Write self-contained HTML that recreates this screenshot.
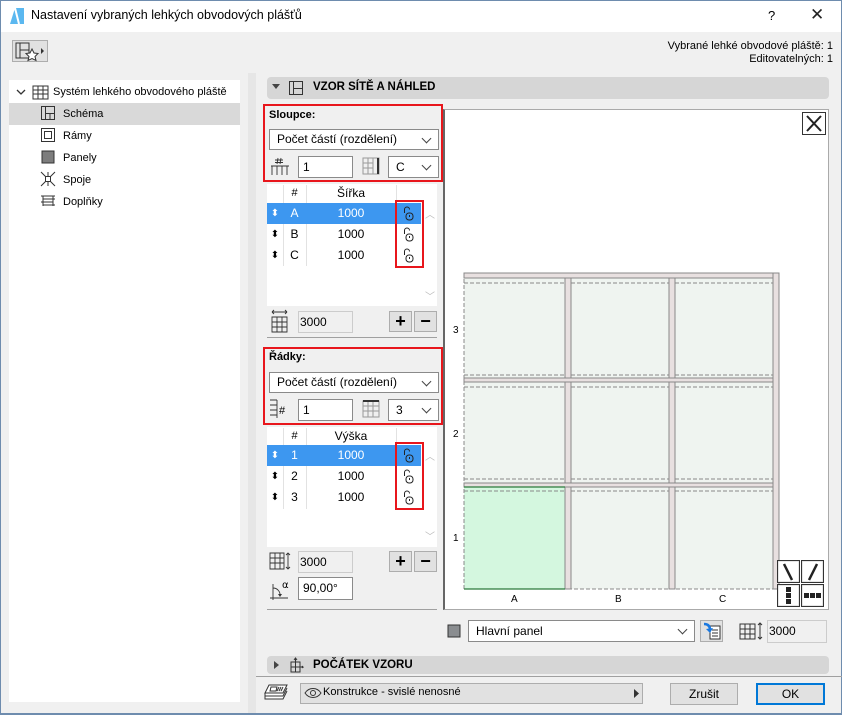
<!DOCTYPE html>
<html><head><meta charset="utf-8"><style>
*{box-sizing:border-box;margin:0;padding:0}
body{width:842px;height:715px;position:relative;background:#f0f0f0;font-family:"Liberation Sans","DejaVu Sans",sans-serif;font-size:12px;color:#000;overflow:hidden}
.a{position:absolute}
.t{position:absolute;white-space:nowrap;font-size:11px}
.dd{position:absolute;background:#fff;border:1px solid #8a8a8a;font-size:12px;padding:0 0 0 7px;line-height:19px;white-space:nowrap}
.dd:after{content:"";position:absolute;right:8px;top:5px;width:6px;height:6px;border-right:1px solid #444;border-bottom:1px solid #444;transform:rotate(45deg)}
.red{position:absolute;border:2px solid #e8161c}
.in{position:absolute;background:#fff;border:1px solid #8a8a8a;font-size:12px;line-height:20px;padding-left:4px}
.ing{position:absolute;background:#f0f0f0;border:1px solid #ccc;font-size:12px;line-height:20px;padding-left:1px}
.btn{position:absolute;background:#e1e1e1;border:1px solid #adadad;text-align:center}
.sel{background:#3d97f0;color:#fff}
.cell{position:absolute;font-size:12px;text-align:center;line-height:21px}
.bar{position:absolute;background:#d6d6d6;border-radius:4px}
</style></head><body>
<div class="a" style="left:0;top:0;width:842px;height:32px;background:#fff;border-left:1px solid #6e8cae;border-right:1px solid #6e8cae;border-top:1px solid #6e8cae"></div>
<svg class="a" style="left:9px;top:7px" width="16" height="18"><path d="M1 17 L6 1 L15 1 L15 17 Z" fill="#5bb8f0"/><path d="M6 1 L10 17" stroke="#fff" stroke-width="2"/></svg>
<div class="t" style="left:31px;top:8px;font-size:12.5px">Nastavení vybraných lehkých obvodových plášťů</div>
<div class="t" style="left:768px;top:8px;font-size:13px">?</div>
<div class="t" style="left:810px;top:5px;font-size:17px;color:#222">✕</div>
<div class="a" style="left:0;top:32px;width:1px;height:683px;background:#6e8cae"></div>
<div class="a" style="left:841px;top:32px;width:1px;height:683px;background:#6e8cae"></div>
<div class="a" style="left:0;top:713px;width:842px;height:2px;background:#6e8cae"></div>
<div class="a" style="left:12px;top:40px;width:36px;height:22px;background:#e1e1e1;border:1px solid #adadad"></div>
<svg class="a" style="left:15px;top:42px" width="32" height="20"><rect x="1" y="1" width="13" height="15" fill="none" stroke="#333"/><path d="M5 1V16M5 8H14" stroke="#333" fill="none"/><path d="M17 7l2 4 4 .5-3 3 1 4-4-2-4 2 1-4-3-3 4-.5z" fill="#fff" stroke="#333"/><path d="M26 6l3 3-3 3z" fill="#333"/></svg>
<div class="t" style="right:9px;top:40px;text-align:right;line-height:13px">Vybrané lehké obvodové pláště: 1<br>Editovatelných: 1</div>
<div class="a" style="left:9px;top:80px;width:231px;height:622px;background:#fff"></div>
<div class="a" style="left:248px;top:73px;width:8px;height:640px;background:#e6e6e6"></div>
<svg class="a" style="left:16px;top:87px" width="10" height="10"><path d="M1 3l4 4 4-4" stroke="#333" fill="none" stroke-width="1.3"/></svg>
<svg class="a" style="left:31px;top:84px" width="18" height="16"><path d="M2 2h15v13H2zM7 2v13M12 2v13M2 6h15M2 10h15" stroke="#333" fill="none"/></svg>
<div class="t" style="left:53px;top:86px">Systém lehkého obvodového pláště</div>
<div class="a" style="left:9px;top:103px;width:231px;height:22px;background:#d9d9d9"></div>
<svg class="a" style="left:40px;top:105px" width="16" height="16"><rect x="1.5" y="1.5" width="13" height="13" fill="none" stroke="#333"/><path d="M5.5 1.5v13M5.5 8.5h9M10 8.5v6" stroke="#333"/></svg>
<div class="t" style="left:63px;top:108px">Schéma</div>
<svg class="a" style="left:40px;top:127px" width="16" height="16"><rect x="1.5" y="1.5" width="13" height="13" fill="none" stroke="#333"/><rect x="4.5" y="4.5" width="7" height="7" fill="none" stroke="#333"/></svg>
<div class="t" style="left:63px;top:130px">Rámy</div>
<svg class="a" style="left:40px;top:149px" width="16" height="16"><rect x="2" y="2" width="12" height="12" fill="#7d7d7d" stroke="#333"/></svg>
<div class="t" style="left:63px;top:152px">Panely</div>
<svg class="a" style="left:40px;top:171px" width="16" height="16"><path d="M1 1l14 14M15 1L1 15M8 1v5M8 10v5" stroke="#333"/><rect x="5.5" y="5.5" width="5" height="5" fill="#fff" stroke="#333"/></svg>
<div class="t" style="left:63px;top:174px">Spoje</div>
<svg class="a" style="left:40px;top:193px" width="16" height="16"><path d="M1 3h14M3 6h12M1 9h12M3 12h12M3 3v10M13 3v10" stroke="#333" fill="none"/></svg>
<div class="t" style="left:63px;top:196px">Doplňky</div>
<div class="bar" style="left:267px;top:77px;width:562px;height:22px"></div>
<svg class="a" style="left:272px;top:84px" width="8" height="6"><path d="M0 0h8L4 5z" fill="#444"/></svg>
<svg class="a" style="left:288px;top:80px" width="16" height="16"><rect x="1.5" y="1.5" width="13" height="13" fill="none" stroke="#333"/><path d="M5.5 1.5v13M5.5 8.5h9" stroke="#333"/></svg>
<div class="t" style="left:313px;top:81px;font-weight:bold;font-size:11.5px">VZOR SÍTĚ A NÁHLED</div>
<div class="red" style="left:263px;top:104px;width:180px;height:78px"></div>
<div class="t" style="left:269px;top:109px;font-weight:bold">Sloupce:</div>
<div class="dd" style="left:269px;top:129px;width:170px;height:21px">Počet částí (rozdělení)</div>
<svg class="a" style="left:270px;top:156px" width="20" height="20"><path d="M8 2l-1 6M11 2l-1 6M5 4h8M5 6.5h8M1 10h18M2 10v9M7 10v9M12 10v9M17 10v9" stroke="#333" fill="none" stroke-width=".9"/></svg>
<div class="in" style="left:298px;top:156px;width:55px;height:22px">1</div>
<svg class="a" style="left:362px;top:157px" width="18" height="18"><path d="M1 1h16v16H1zM6 1v16M11 1v16M1 6h10M1 11h10" stroke="#999" fill="none"/><path d="M16 1v16" stroke="#333" stroke-width="2"/></svg>
<div class="dd" style="left:388px;top:156px;width:51px;height:22px;line-height:20px">C</div>
<div class="a" style="left:267px;top:184px;width:170px;height:122px;background:#fff"></div>
<div class="a" style="left:283px;top:185px;width:1px;height:81px;background:#e2e2e2"></div>
<div class="a" style="left:306px;top:185px;width:1px;height:81px;background:#e2e2e2"></div>
<div class="a" style="left:396px;top:185px;width:1px;height:81px;background:#e2e2e2"></div>
<div class="cell" style="left:283px;top:184px;width:23px;line-height:18px;font-size:11px">#</div>
<div class="cell" style="left:306px;top:184px;width:90px;line-height:18px">Šířka</div>
<div class="a sel" style="left:267px;top:203px;width:154px;height:21px"></div>
<div class="cell" style="left:267px;top:203px;width:16px;color:#fff;font-size:10px">⬍</div>
<div class="cell" style="left:283px;top:203px;width:23px;color:#fff">A</div>
<div class="cell" style="left:306px;top:203px;width:90px;color:#fff">1000</div>
<div class="cell" style="left:267px;top:224px;width:16px;font-size:10px">⬍</div>
<div class="cell" style="left:283px;top:224px;width:23px">B</div>
<div class="cell" style="left:306px;top:224px;width:90px">1000</div>
<div class="cell" style="left:267px;top:245px;width:16px;font-size:10px">⬍</div>
<div class="cell" style="left:283px;top:245px;width:23px">C</div>
<div class="cell" style="left:306px;top:245px;width:90px">1000</div>
<div class="t" style="left:425px;top:206px;color:#bbb;font-size:10px">︿</div>
<div class="t" style="left:425px;top:288px;color:#bbb;font-size:10px">﹀</div>
<div class="red" style="left:395px;top:200px;width:29px;height:68px"></div>
<svg class="a" style="left:401px;top:205px" width="14" height="60"><g fill="none" stroke="#222"><path d="M3.5 8V4.5a2.5 2.5 0 0 1 5 0"/><rect x="5" y="8" width="7" height="7" rx="3"/><path d="M8.5 10v2"/><g transform="translate(0,21)"><path d="M3.5 8V4.5a2.5 2.5 0 0 1 5 0"/><rect x="5" y="8" width="7" height="7" rx="3"/><path d="M8.5 10v2"/></g><g transform="translate(0,42)"><path d="M3.5 8V4.5a2.5 2.5 0 0 1 5 0"/><rect x="5" y="8" width="7" height="7" rx="3"/><path d="M8.5 10v2"/></g></g></svg>
<svg class="a" style="left:270px;top:309px" width="20" height="24"><path d="M2 3h15M2 3l2-2M2 3l2 2M17 3l-2-2M17 3l-2 2M2 8h15v15H2zM7 8v15M12 8v15M2 13h15M2 18h15" stroke="#333" fill="none" stroke-width=".9"/></svg>
<div class="ing" style="left:298px;top:311px;width:55px;height:22px">3000</div>
<div class="btn" style="left:389px;top:311px;width:23px;height:21px;font-size:18px;line-height:18px;font-weight:bold">+</div>
<div class="btn" style="left:414px;top:311px;width:23px;height:21px;font-size:18px;line-height:18px;font-weight:bold">−</div>
<div class="a" style="left:267px;top:337px;width:170px;height:1px;background:#a0a0a0"></div>
<div class="red" style="left:263px;top:347px;width:180px;height:78px"></div>
<div class="t" style="left:269px;top:351px;font-weight:bold">Řádky:</div>
<div class="dd" style="left:269px;top:372px;width:170px;height:21px">Počet částí (rozdělení)</div>
<svg class="a" style="left:269px;top:399px" width="22" height="20"><path d="M8 1v18M1 1h7M1 6h7M1 11h7M1 16h7" stroke="#333" fill="none" stroke-width=".9"/><text x="10" y="15" font-size="11" font-family="Liberation Sans">#</text></svg>
<div class="in" style="left:298px;top:399px;width:55px;height:22px">1</div>
<svg class="a" style="left:362px;top:400px" width="18" height="18"><path d="M1 1h16v16H1zM6 1v16M11 1v16M1 6h16M1 11h16" stroke="#999" fill="none"/><path d="M1 1h16" stroke="#333" stroke-width="2"/></svg>
<div class="dd" style="left:388px;top:399px;width:51px;height:22px;line-height:20px">3</div>
<div class="a" style="left:267px;top:427px;width:170px;height:120px;background:#fff"></div>
<div class="a" style="left:283px;top:428px;width:1px;height:81px;background:#e2e2e2"></div>
<div class="a" style="left:306px;top:428px;width:1px;height:81px;background:#e2e2e2"></div>
<div class="a" style="left:396px;top:428px;width:1px;height:81px;background:#e2e2e2"></div>
<div class="cell" style="left:283px;top:427px;width:23px;line-height:18px;font-size:11px">#</div>
<div class="cell" style="left:306px;top:427px;width:90px;line-height:18px">Výška</div>
<div class="a sel" style="left:267px;top:445px;width:154px;height:21px"></div>
<div class="cell" style="left:267px;top:445px;width:16px;color:#fff;font-size:10px">⬍</div>
<div class="cell" style="left:283px;top:445px;width:23px;color:#fff">1</div>
<div class="cell" style="left:306px;top:445px;width:90px;color:#fff">1000</div>
<div class="cell" style="left:267px;top:466px;width:16px;font-size:10px">⬍</div>
<div class="cell" style="left:283px;top:466px;width:23px">2</div>
<div class="cell" style="left:306px;top:466px;width:90px">1000</div>
<div class="cell" style="left:267px;top:487px;width:16px;font-size:10px">⬍</div>
<div class="cell" style="left:283px;top:487px;width:23px">3</div>
<div class="cell" style="left:306px;top:487px;width:90px">1000</div>
<div class="t" style="left:425px;top:448px;color:#bbb;font-size:10px">︿</div>
<div class="t" style="left:425px;top:528px;color:#bbb;font-size:10px">﹀</div>
<div class="red" style="left:395px;top:442px;width:29px;height:68px"></div>
<svg class="a" style="left:401px;top:447px" width="14" height="60"><g fill="none" stroke="#222"><path d="M3.5 8V4.5a2.5 2.5 0 0 1 5 0"/><rect x="5" y="8" width="7" height="7" rx="3"/><path d="M8.5 10v2"/><g transform="translate(0,21)"><path d="M3.5 8V4.5a2.5 2.5 0 0 1 5 0"/><rect x="5" y="8" width="7" height="7" rx="3"/><path d="M8.5 10v2"/></g><g transform="translate(0,42)"><path d="M3.5 8V4.5a2.5 2.5 0 0 1 5 0"/><rect x="5" y="8" width="7" height="7" rx="3"/><path d="M8.5 10v2"/></g></g></svg>
<svg class="a" style="left:269px;top:551px" width="24" height="20"><path d="M1 2h14v16H1zM6 2v16M11 2v16M1 7h14M1 12h14M19 2v16M17 4l2-2 2 2M17 16l2 2 2-2" stroke="#333" fill="none" stroke-width=".9"/></svg>
<div class="ing" style="left:298px;top:551px;width:55px;height:22px">3000</div>
<div class="btn" style="left:389px;top:551px;width:23px;height:21px;font-size:18px;line-height:18px;font-weight:bold">+</div>
<div class="btn" style="left:414px;top:551px;width:23px;height:21px;font-size:18px;line-height:18px;font-weight:bold">−</div>
<svg class="a" style="left:269px;top:578px" width="24" height="22"><path d="M1 20h18M4 6v16M4 10a7 7 0 0 1 7 8" stroke="#333" fill="none" stroke-width=".9"/><path d="M9 16l2 3 2-3z" fill="#333"/><text x="13" y="10" font-size="10" font-family="DejaVu Sans">α</text></svg>
<div class="in" style="left:298px;top:577px;width:55px;height:23px">90,00°</div>
<div class="a" style="left:267px;top:609px;width:170px;height:1px;background:#a0a0a0"></div>
<div class="a" style="left:443px;top:109px;width:386px;height:501px;background:#fff;border:1px solid #aaa;border-left:2px solid #666"></div>
<div class="a" style="left:802px;top:112px;width:24px;height:23px;border:1px solid #333;background:#fff"></div>
<svg class="a" style="left:802px;top:112px" width="24" height="23"><path d="M5 4l14 15M19 4L5 19" stroke="#222" stroke-width="2"/></svg>
<svg class="a" style="left:444px;top:265px" width="384" height="340">
<g>
<rect x="20" y="8" width="315" height="316" fill="#eff4f0"/>
<rect x="20" y="220" width="101" height="104" fill="#d4f7df"/>
<g fill="#e8e0e0" stroke="#888"><rect x="121" y="8" width="6" height="316"/><rect x="225" y="8" width="6" height="316"/><rect x="329" y="8" width="6" height="316"/></g>
<g fill="#e8e0e0" stroke="#888"><rect x="20" y="8" width="309" height="5"/><rect x="20" y="113" width="309" height="4"/><rect x="20" y="218" width="309" height="4"/></g>
<g fill="none" stroke="#888" stroke-dasharray="4,2"><path d="M20 8v316h309M20 18h101M127 18h98M231 18h98M20 110h101M127 110h98M231 110h98M20 122h101M127 122h98M231 122h98M20 214h101M127 214h98M231 214h98M20 226h101M127 226h98M231 226h98"/></g>
<path d="M20 222h101M20 324h101" stroke="#2a7a3a" stroke-width="1.2"/>
</g>
<g font-family="Liberation Sans" font-size="10" fill="#000"><text x="9" y="68">3</text><text x="9" y="172">2</text><text x="9" y="276">1</text><text x="67" y="337">A</text><text x="171" y="337">B</text><text x="275" y="337">C</text></g>
</svg>
<svg class="a" style="left:777px;top:560px" width="48" height="48">
<g stroke="#ccc" fill="#fff"><rect x="1" y="1" width="21" height="21"/><rect x="25" y="1" width="21" height="21"/><rect x="1" y="25" width="21" height="21"/><rect x="25" y="25" width="21" height="21"/></g>
<g fill="none" stroke="#333"><rect x=".5" y=".5" width="22" height="22"/><rect x="24.5" y=".5" width="22" height="22"/><rect x=".5" y="24.5" width="22" height="22"/><rect x="24.5" y="24.5" width="22" height="22"/></g>
<path d="M7 4l8 16M40 4l-8 16" stroke="#222" stroke-width="2.5"/>
<g fill="#222"><rect x="9" y="27" width="5" height="5"/><rect x="9" y="33" width="5" height="5"/><rect x="9" y="39" width="5" height="5"/><rect x="27" y="33" width="5" height="5"/><rect x="33" y="33" width="5" height="5"/><rect x="39" y="33" width="5" height="5"/></g>
</svg>
<svg class="a" style="left:446px;top:623px" width="16" height="16"><rect x="2" y="2" width="12" height="12" fill="#8a8d90" stroke="#333"/></svg>
<div class="dd" style="left:468px;top:620px;width:227px;height:22px;line-height:20px">Hlavní panel</div>
<div class="btn" style="left:700px;top:620px;width:23px;height:22px"></div>
<svg class="a" style="left:702px;top:621px" width="20" height="20"><rect x="8" y="5" width="10" height="13" fill="#fff" stroke="#333"/><path d="M10 9h6M10 12h6M10 15h6" stroke="#333"/><path d="M2 3c4 0 6 2 6 6" stroke="#1a78e0" stroke-width="2.5" fill="none"/><path d="M4 8l4 4 3-5z" fill="#1a78e0"/></svg>
<svg class="a" style="left:739px;top:621px" width="26" height="20"><path d="M1 3h15v15H1zM6 3v15M11 3v15M1 8h15M1 13h15M21 2v16M19 4l2-2 2 2M19 16l2 2 2-2" stroke="#333" fill="none"/></svg>
<div class="ing" style="left:767px;top:620px;width:60px;height:23px">3000</div>
<div class="bar" style="left:267px;top:656px;width:562px;height:18px"></div>
<svg class="a" style="left:274px;top:661px" width="6" height="8"><path d="M0 0v8l5-4z" fill="#444"/></svg>
<svg class="a" style="left:288px;top:657px" width="16" height="16"><path d="M3 5h9v10H3zM3 10h9M7.5 1v14M6 3l1.5-2 1.5 2M12 10h3l-1-1M15 10l-1 1" stroke="#333" fill="none"/></svg>
<div class="t" style="left:313px;top:659px;font-weight:bold;font-size:11.5px">POČÁTEK VZORU</div>
<div class="a" style="left:256px;top:676px;width:586px;height:1px;background:#a0a0a0"></div>
<svg class="a" style="left:264px;top:683px" width="26" height="20"><path d="M5 2h18l-4 8H1zM1 10v3l18 0 4-8M1 13v3h18l4-8" stroke="#333" fill="#fff"/><path d="M7 4h6l-1 4H6zM15 4l-2 4M17 4l-2 4M19 4l-2 4" stroke="#333" fill="none"/></svg>
<div class="a" style="left:300px;top:683px;width:343px;height:21px;background:#e1e1e1;border:1px solid #adadad"></div>
<svg class="a" style="left:304px;top:686px" width="18" height="14"><path d="M1 7c4-6 12-6 16 0c-4 6-12 6-16 0z" fill="none" stroke="#333"/><circle cx="9" cy="7" r="2.5" fill="none" stroke="#333"/></svg>
<div class="t" style="left:323px;top:686px">Konstrukce - svislé nenosné</div>
<svg class="a" style="left:634px;top:689px" width="6" height="9"><path d="M0 0v9l5-4.5z" fill="#333"/></svg>
<div class="btn" style="left:670px;top:683px;width:68px;height:22px;font-size:12px;line-height:20px">Zrušit</div>
<div class="btn" style="left:756px;top:683px;width:69px;height:22px;font-size:12px;line-height:18px;border:2px solid #0078d7">OK</div>
</body></html>
